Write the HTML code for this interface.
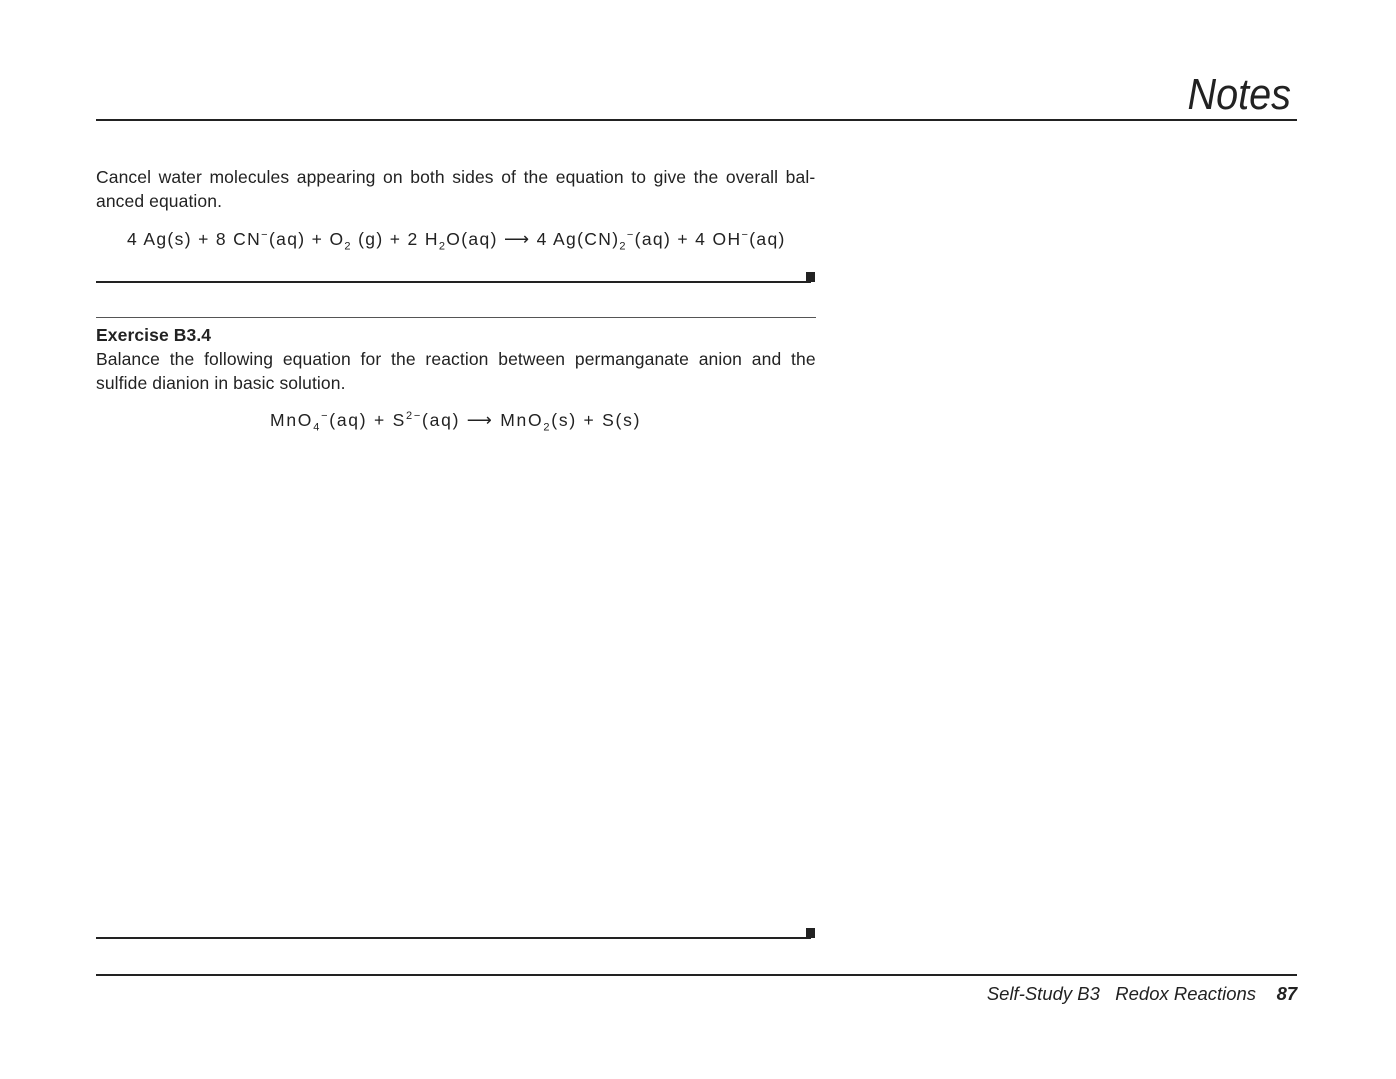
<!DOCTYPE html>
<html><head><meta charset="utf-8"><style>
body{margin:0;width:1396px;height:1079px;background:#fff;position:relative;font-family:"Liberation Sans",sans-serif;color:#222;overflow:hidden}
.a{position:absolute;white-space:nowrap}
.t{font-size:17.5px;letter-spacing:0.1px}
.line{position:absolute;background:#222}
sub,sup{font-size:11px;line-height:0}
</style></head><body>
<div class="a" style="right:105px;top:70px;font-size:44px;font-style:italic;color:#222;transform:scaleX(0.9);transform-origin:right">Notes</div>
<div class="line" style="left:96px;top:119px;width:1201px;height:2px"></div>
<div class="a t" style="left:96px;top:167px;word-spacing:2.6px">Cancel water molecules appearing on both sides of the equation to give the overall bal-</div>
<div class="a t" style="left:96px;top:191px">anced equation.</div>
<div class="a t" style="left:127px;top:229px;letter-spacing:1.35px">4 Ag(s) + 8 CN<sup>−</sup>(aq) + O<sub>2</sub> (g) + 2 H<sub>2</sub>O(aq) ⟶ 4 Ag(CN)<sub>2</sub><sup>−</sup>(aq) + 4 OH<sup>−</sup>(aq)</div>
<div class="line" style="left:96px;top:281px;width:715px;height:1.5px"></div>
<div class="line" style="left:806px;top:272px;width:9px;height:10px"></div>
<div class="line" style="left:96px;top:317px;width:720px;height:1px;background:#555"></div>
<div class="a t" style="left:96px;top:325px;font-weight:bold">Exercise B3.4</div>
<div class="a t" style="left:96px;top:349px;word-spacing:4.8px">Balance the following equation for the reaction between permanganate anion and the</div>
<div class="a t" style="left:96px;top:373px">sulfide dianion in basic solution.</div>
<div class="a t" style="left:270px;top:410px;letter-spacing:1.75px">MnO<sub>4</sub><sup>−</sup>(aq) + S<sup>2−</sup>(aq) ⟶ MnO<sub>2</sub>(s) + S(s)</div>
<div class="line" style="left:96px;top:937px;width:715px;height:1.5px"></div>
<div class="line" style="left:806px;top:928px;width:9px;height:10px"></div>
<div class="line" style="left:96px;top:974px;width:1201px;height:2px"></div>
<div class="a" style="right:99px;top:984px;font-size:18px;font-style:italic;transform:scaleX(1.027);transform-origin:right">Self-Study B3&nbsp;&nbsp;&nbsp;Redox Reactions&nbsp;&nbsp;&nbsp;&nbsp;<b>87</b></div>
</body></html>
